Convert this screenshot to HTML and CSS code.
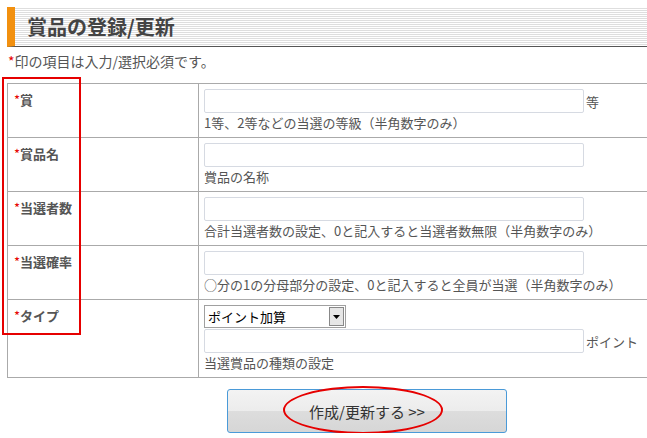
FILE: index.html
```html
<!DOCTYPE html>
<html lang="ja">
<head>
<meta charset="utf-8">
<title>賞品の登録/更新</title>
<link rel="stylesheet" href="styles.css">
</head>
<body>
<div class="page">
  <h2 class="title">賞品の登録/更新</h2>
  <p class="note"><span class="req">*</span>印の項目は入力/選択必須です。</p>
  <div class="table-wrap">
    <table class="form">
      <tr>
        <th><span class="req">*</span>賞</th>
        <td>
          <div class="field"><input type="text" class="text"><span class="unit">等</span></div>
          <div class="hint">1等、2等などの当選の等級（半角数字のみ）</div>
        </td>
      </tr>
      <tr>
        <th><span class="req">*</span>賞品名</th>
        <td>
          <div class="field"><input type="text" class="text"></div>
          <div class="hint">賞品の名称</div>
        </td>
      </tr>
      <tr>
        <th><span class="req">*</span>当選者数</th>
        <td>
          <div class="field"><input type="text" class="text"></div>
          <div class="hint">合計当選者数の設定、0と記入すると当選者数無限（半角数字のみ）</div>
        </td>
      </tr>
      <tr>
        <th><span class="req">*</span>当選確率</th>
        <td>
          <div class="field"><input type="text" class="text"></div>
          <div class="hint">○分の1の分母部分の設定、0と記入すると全員が当選（半角数字のみ）</div>
        </td>
      </tr>
      <tr>
        <th><span class="req">*</span>タイプ</th>
        <td>
          <div class="select-wrap">
            <select class="select"><option>ポイント加算</option></select>
            <span class="arrow"><svg width="7" height="4" viewBox="0 0 7 4"><path d="M0 0H7L3.5 4Z" fill="#000"/></svg></span>
          </div>
          <div class="field"><input type="text" class="text"><span class="unit">ポイント</span></div>
          <div class="hint">当選賞品の種類の設定</div>
        </td>
      </tr>
    </table>
    <div class="annot-rect"></div>
  </div>
  <div class="actions">
    <div class="btn-holder">
      <button type="button" class="submit">作成/更新する &gt;&gt;</button>
      <span class="annot-ellipse"></span>
    </div>
  </div>
</div>
</body>
</html>
```

FILE: styles.css
```css
html, body {
  margin: 0;
  padding: 0;
  background: #fff;
}
body {
  font-family: "Noto Sans CJK JP", "Noto Sans", sans-serif;
  font-size: 13px;
  color: #555;
}
.page {
  width: 640px;
  padding: 7px 0 0 7px;
}
.title {
  margin: 0;
  height: 39px;
  display: flex;
  align-items: center;
  padding-left: 12px;
  border-left: 8px solid #f2900f;
  border-bottom: 1px solid #555;
  background: repeating-linear-gradient(to bottom, #fff 0, #fff 1px, #dedede 1px, #dedede 2px);
  font-size: 20px;
  font-weight: bold;
  color: #444;
  line-height: 1;
}
.note {
  margin: 4px 0 0 1px;
  line-height: 20px;
  font-size: 14px;
  color: #555;
}
.req {
  color: #e60000;
  font-weight: normal;
}
.table-wrap {
  position: relative;
  margin-top: 12px;
}
.form {
  width: 100%;
  border-collapse: collapse;
}
.form th, .form td {
  border: 1px solid #aaa;
  vertical-align: top;
  text-align: left;
}
.form td {
  border-right: none;
  padding: 5px 5px 5px 5px;
}
.form th {
  width: 178px;
  padding: 7px 6px 5px 6px;
  font-weight: bold;
  font-size: 13px;
  color: #555;
  line-height: 18px;
}
.field {
  display: flex;
  align-items: center;
  height: 24px;
}
.text {
  box-sizing: border-box;
  width: 380px;
  height: 24px;
  margin: 0;
  border: 1px solid #d6dae2;
  border-radius: 2px;
  background: #fff;
  font: inherit;
}
.unit {
  margin-left: 2px;
  color: #555;
  font-size: 13px;
}
.hint {
  margin-top: 1px;
  line-height: 18px;
  font-size: 13px;
  color: #555;
}
.select-wrap {
  position: relative;
  width: 142px;
  height: 23px;
  margin-bottom: 1px;
}
.select {
  appearance: none;
  -webkit-appearance: none;
  box-sizing: border-box;
  width: 142px;
  height: 23px;
  margin: 0;
  padding: 0 0 0 3px;
  border: 1px solid #a0a0a0;
  border-radius: 0;
  background: #fff;
  font-family: "Noto Sans CJK JP", sans-serif;
  font-size: 13px;
  color: #000;
}
.arrow {
  position: absolute;
  right: 2px;
  top: 2px;
  width: 13px;
  height: 17px;
  border: 1px solid #888;
  background: #e6e6e6;
  display: flex;
  align-items: center;
  justify-content: center;
  pointer-events: none;
}
.annot-rect {
  position: absolute;
  left: -5px;
  top: -6px;
  width: 75px;
  height: 254px;
  border: 2px solid #e60000;
}
.actions {
  display: flex;
  justify-content: center;
  padding-left: 80px;
  margin-top: 11px;
}
.btn-holder {
  position: relative;
}
.submit {
  width: 280px;
  height: 44px;
  margin: 0;
  border: 1px solid #4a9ad8;
  border-radius: 3px;
  background: linear-gradient(to bottom, #f3f3f3 0%, #ececec 50%, #dddddd 50%, #d6d6d6 100%);
  font-family: "Noto Sans CJK JP", sans-serif;
  font-size: 15px;
  color: #333;
}
.annot-ellipse {
  position: absolute;
  left: 56px;
  top: -3px;
  width: 156px;
  height: 44px;
  border: 2px solid #e60000;
  border-radius: 50%;
  pointer-events: none;
}
```
